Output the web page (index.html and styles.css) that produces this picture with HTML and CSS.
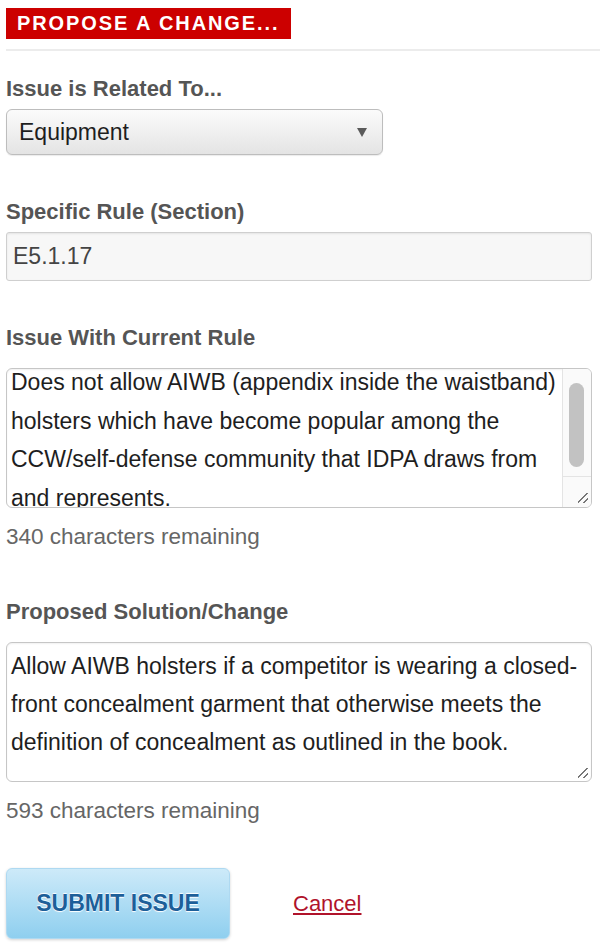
FILE: index.html
```html
<!DOCTYPE html>
<html>
<head>
<meta charset="utf-8">
<link rel="stylesheet" href="styles.css">
</head>
<body>
<div class="page">
  <div class="title-wrap"><h1 class="title">PROPOSE A CHANGE...</h1></div>
  <div class="rule"></div>

  <div class="field field-first">
    <label class="label">Issue is Related To...</label>
    <div class="select">
      <span class="select-text">Equipment</span>
      <span class="select-arrow"></span>
    </div>
  </div>

  <div class="field">
    <label class="label">Specific Rule (Section)</label>
    <div class="input">E5.1.17</div>
  </div>

  <div class="field">
    <label class="label label-ta">Issue With Current Rule</label>
    <div class="textarea textarea-scroll">
      <div class="ta-text ta-scrolled">Does not allow AIWB (appendix inside the waistband) holsters which have become popular among the CCW/self-defense community that IDPA draws from and represents.</div>
      <div class="scrollbar">
        <div class="thumb"></div>
        <div class="grip-box"><span class="grip"></span></div>
      </div>
    </div>
    <div class="counter">340 characters remaining</div>
  </div>

  <div class="field field-gap">
    <label class="label label-ta">Proposed Solution/Change</label>
    <div class="textarea">
      <div class="ta-text">Allow AIWB holsters if a competitor is wearing a closed-front concealment garment that otherwise meets the definition of concealment as outlined in the book.</div>
      <span class="grip grip-corner"></span>
    </div>
    <div class="counter">593 characters remaining</div>
  </div>

  <div class="actions">
    <button class="submit">SUBMIT ISSUE</button>
    <a class="cancel" href="#">Cancel</a>
  </div>
</div>
</body>
</html>
```

FILE: styles.css
```css
html, body {
  margin: 0;
  padding: 0;
  background: #fff;
}
body {
  font-family: "Liberation Sans", Arial, Helvetica, sans-serif;
  width: 600px;
  height: 944px;
  overflow: hidden;
}
.page {
  padding: 8px 8px 0 6px;
}
.title-wrap {
  display: flex;
}
.title {
  margin: 0;
  background: #cc0000;
  color: #fff;
  font-size: 20px;
  font-weight: bold;
  letter-spacing: 1.9px;
  line-height: 31px;
  height: 31px;
  padding: 0 11px 0 11px;
  width: 263px;
  white-space: nowrap;
}
.rule {
  margin: 10px -8px 0 0;
  height: 2px;
  background: #ececec;
}
.field {
  margin-top: 45px;
  display: flex;
  flex-direction: column;
}
.field-first {
  margin-top: 26px;
}
.field-gap {
  margin-top: 51px;
}
.label {
  font-size: 22px;
  font-weight: bold;
  color: #555;
  line-height: 24px;
  margin-bottom: 8px;
}
.label-ta {
  margin-bottom: 18px;
}
.select {
  box-sizing: border-box;
  width: 377px;
  height: 46px;
  border: 1px solid #bdbdbd;
  border-radius: 6px;
  background: linear-gradient(#fbfbfb, #e4e4e4);
  box-shadow: 0 1px 1px rgba(0,0,0,0.08);
  display: flex;
  align-items: center;
  justify-content: space-between;
  padding: 0 15px 0 12px;
}
.select-text {
  font-size: 23px;
  color: #1e1e1e;
}
.select-arrow {
  width: 0;
  height: 0;
  border-left: 5px solid transparent;
  border-right: 5px solid transparent;
  border-top: 9px solid #5a5a5a;
}
.input {
  box-sizing: border-box;
  width: 586px;
  height: 49px;
  border: 1px solid #cfcfcf;
  border-radius: 3px;
  background: #f7f7f7;
  box-shadow: inset 0 1px 2px rgba(0,0,0,0.08);
  font-size: 23px;
  color: #444;
  line-height: 47px;
  padding-left: 6px;
}
.textarea {
  position: relative;
  box-sizing: border-box;
  width: 586px;
  height: 140px;
  border: 1px solid #c6c6c6;
  border-radius: 6px;
  background: #fff;
  overflow: hidden;
  box-shadow: inset 0 1px 2px rgba(0,0,0,0.06);
}
.ta-text {
  font-size: 23px;
  color: #1e1e1e;
  line-height: 38px;
  padding: 4px 6px 0 4px;
}
.textarea-scroll .ta-text {
  padding-right: 30px;
  line-height: 38.6px;
}
.ta-scrolled {
  margin-top: -10px;
}
.scrollbar {
  position: absolute;
  top: 0;
  right: 0;
  bottom: 0;
  width: 28px;
  border-left: 1px solid #e4e4e4;
  background: #fafafa;
  display: flex;
  flex-direction: column;
}
.thumb {
  margin: 14px 0 0 6px;
  width: 15px;
  height: 84px;
  border-radius: 8px;
  background: #c2c2c2;
}
.grip-box {
  margin-top: auto;
  height: 30px;
  border-top: 1px solid #e4e4e4;
  position: relative;
}
.grip {
  position: absolute;
  right: 3px;
  bottom: 4px;
  width: 10px;
  height: 10px;
  background:
    linear-gradient(135deg, transparent 44%, #777 44%, #777 54%, transparent 54%),
    linear-gradient(135deg, transparent 74%, #777 74%, #777 84%, transparent 84%);
}
.grip-corner {
  right: 3px;
  bottom: 3px;
}
.counter {
  margin-top: 17px;
  font-size: 22.5px;
  line-height: 24px;
  color: #666;
}
.actions {
  margin-top: 45px;
  display: flex;
  align-items: center;
}
.submit {
  box-sizing: border-box;
  width: 224px;
  height: 71px;
  border: 1px solid #aed9f1;
  border-radius: 6px;
  background: linear-gradient(#cdeaf9, #8fcfef);
  box-shadow: 0 1px 3px rgba(0,0,0,0.18);
  font-family: "Liberation Sans", Arial, Helvetica, sans-serif;
  font-size: 23px;
  font-weight: bold;
  color: #1d5f99;
  text-shadow: 0 1px 1px #fff, 0 -1px 1px #fff;
  padding: 0;
}
.cancel {
  margin-left: 63px;
  font-size: 22px;
  color: #b0132b;
  text-decoration: underline;
}
```
